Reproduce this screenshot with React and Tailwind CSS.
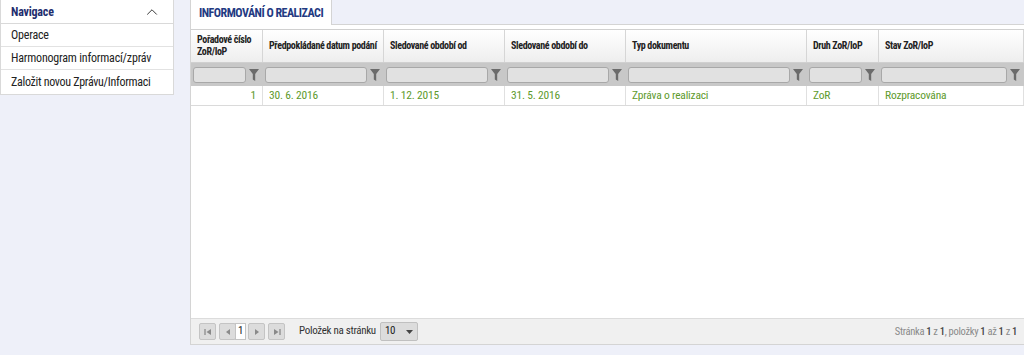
import { ChevronUp } from 'lucide-react';

const font = { fontFamily: '"Roboto Condensed", "Liberation Sans Narrow", "DejaVu Sans Condensed", Roboto, sans-serif' };

const cols = [
  { w: 'w-[72px] shrink-0', label: 'Pořadové číslo ZoR/IoP', value: '1', right: true },
  { w: 'w-[121px] shrink-0', label: 'Předpokládané datum podání', value: '30. 6. 2016' },
  { w: 'w-[121px] shrink-0', label: 'Sledované období od', value: '1. 12. 2015' },
  { w: 'w-[121px] shrink-0', label: 'Sledované období do', value: '31. 5. 2016' },
  { w: 'w-[181px] shrink-0', label: 'Typ dokumentu', value: 'Zpráva o realizaci' },
  { w: 'w-[72px] shrink-0', label: 'Druh ZoR/IoP', value: 'ZoR' },
  { w: 'flex-1 min-w-0', label: 'Stav ZoR/IoP', value: 'Rozpracována' },
];

function Funnel() {
  return (
    <svg width="10" height="12" viewBox="0 0 10 12" className="shrink-0">
      <path d="M0 0h10L6.2 5v7L3.8 10.5V5z" fill="#6b6b6b" />
    </svg>
  );
}

function PagerBtn({ children }) {
  return (
    <div className="w-[17px] h-[17px] border border-[#c4c4c4] bg-[#dcdcdc] rounded-[2px] flex items-center justify-center">
      {children}
    </div>
  );
}

export default function App() {
  return (
    <div className="w-[1024px] h-[355px] bg-[#eef0f9] flex overflow-hidden text-[#222]" style={font}>
      {/* Sidebar */}
      <div className="w-[174px] shrink-0">
        <div className="bg-white border border-[#d9d9d9] border-t-0">
          <div className="h-[24px] flex items-center justify-between px-[10px] border-b border-[#d9d9d9]">
            <span className="text-[12px] font-bold text-[#1e2e6e] tracking-[-0.2px]">Navigace</span>
            <ChevronUp className="w-[18px] h-[18px] text-[#333] mr-[2px]" strokeWidth={1.3} />
          </div>
          <div className="h-[23px] flex items-center px-[10px] border-b border-[#e2e2e2] text-[12px] tracking-[-0.2px]">Operace</div>
          <div className="h-[23px] flex items-center px-[10px] border-b border-[#e2e2e2] text-[12px] tracking-[-0.2px]">Harmonogram informací/zpráv</div>
          <div className="h-[24px] flex items-center px-[10px] text-[12px] tracking-[-0.3px]">Založit novou Zprávu/Informaci</div>
        </div>
      </div>

      {/* Main */}
      <div className="ml-[16px] flex-1 min-w-0 flex flex-col">
        <div className="flex">
          <div className="h-[25px] px-[8px] bg-white border-l border-r border-[#d4d4d4] flex items-center text-[12px] font-bold text-[#233a82] tracking-[-0.5px] -mb-px relative z-10">
            INFORMOVÁNÍ O REALIZACI
          </div>
        </div>
        <div className="h-[321px] bg-white border border-[#d4d4d4] border-r-0 flex flex-col overflow-hidden">
          <div className="h-[4px] shrink-0" />
          {/* header */}
          <div className="flex h-[34px] shrink-0 bg-gradient-to-b from-white to-[#eeeeee] border-t border-b border-[#d0d0d0]">
            {cols.map((c, i) => (
              <div key={i} className={`${c.w} px-[6px] flex items-center text-[10px] font-bold leading-[12px] tracking-[-0.35px] border-r border-[#d6d6d6]`}>
                {c.label}
              </div>
            ))}
          </div>
          {/* filter */}
          <div className="flex h-[23px] shrink-0 bg-[#c8c8c8]">
            {cols.map((c, i) => (
              <div key={i} className={`${c.w} flex items-center pl-[2px] pr-[4px] gap-[3px]`}>
                <div className="flex-1 h-[16px] bg-[#e1e1e1] border border-[#a8a8a8] rounded-[3px]" />
                <Funnel />
              </div>
            ))}
          </div>
          {/* row */}
          <div className="flex h-[20px] shrink-0 border-b border-[#dadada]">
            {cols.map((c, i) => (
              <div key={i} className={`${c.w} px-[6px] flex items-center text-[11.5px] tracking-[-0.2px] text-[#5e9a2c] border-r border-[#e0e0e0] ${c.right ? 'justify-end' : ''}`}>
                {c.value}
              </div>
            ))}
          </div>
          <div className="flex-1" />
          {/* footer */}
          <div className="h-[26px] shrink-0 bg-[#f0f0f0] border-t border-[#dcdcdc] flex items-center pl-[8px] pr-[7px] text-[11px] tracking-[-0.3px]">
            <PagerBtn>
              <svg width="8" height="8" viewBox="0 0 8 8"><path d="M1 1v6" stroke="#8a8a8a" strokeWidth="1.3" /><path d="M7 1L2.5 4L7 7z" fill="#8a8a8a" /></svg>
            </PagerBtn>
            <div className="ml-[3px] flex items-center">
              <PagerBtn>
                <svg width="8" height="8" viewBox="0 0 8 8"><path d="M6 1L2 4L6 7z" fill="#8a8a8a" /></svg>
              </PagerBtn>
            </div>
            <div className="w-[11px] h-[17px] bg-white border border-[#c4c4c4] flex items-center justify-center text-[11px] -ml-px">1</div>
            <div className="ml-[2px]">
              <PagerBtn>
                <svg width="8" height="8" viewBox="0 0 8 8"><path d="M2 1L6 4L2 7z" fill="#8a8a8a" /></svg>
              </PagerBtn>
            </div>
            <div className="ml-[3px]">
              <PagerBtn>
                <svg width="8" height="8" viewBox="0 0 8 8"><path d="M7 1v6" stroke="#8a8a8a" strokeWidth="1.3" /><path d="M1 1L5.5 4L1 7z" fill="#8a8a8a" /></svg>
              </PagerBtn>
            </div>
            <span className="ml-[14px] text-[#333]">Položek na stránku</span>
            <div className="ml-[4px] w-[38px] h-[19px] bg-[#dcdcdc] border border-[#c0c0c0] rounded-[2px] flex items-center justify-between px-[4px]">
              <span>10</span>
              <svg width="7" height="4" viewBox="0 0 7 4"><path d="M0 0h7L3.5 4z" fill="#444" /></svg>
            </div>
            <div className="flex-1" />
            <span className="text-[#8a8a8a] text-[10.5px]">
              Stránka <b className="text-[#444] font-medium">1</b> z <b className="text-[#444] font-medium">1</b>, položky <b className="text-[#444] font-medium">1</b> až <b className="text-[#444] font-medium">1</b> z <b className="text-[#444] font-medium">1</b>
            </span>
          </div>
        </div>
      </div>
    </div>
  );
}
